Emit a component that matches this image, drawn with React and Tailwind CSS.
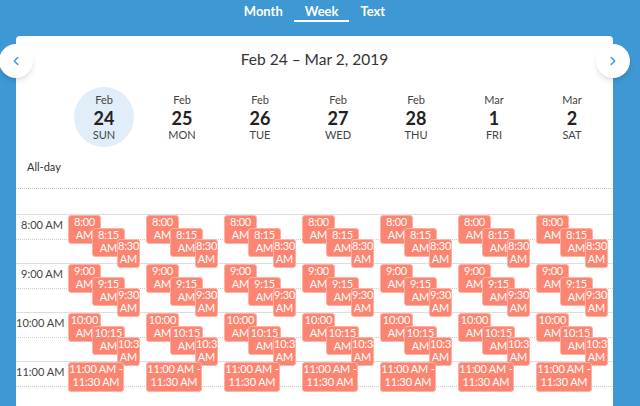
import { ChevronLeft, ChevronRight } from 'lucide-react'

const days = [
  { mon: 'Feb', num: 24, dow: 'SUN', today: true },
  { mon: 'Feb', num: 25, dow: 'MON' },
  { mon: 'Feb', num: 26, dow: 'TUE' },
  { mon: 'Feb', num: 27, dow: 'WED' },
  { mon: 'Feb', num: 28, dow: 'THU' },
  { mon: 'Mar', num: 1, dow: 'FRI' },
  { mon: 'Mar', num: 2, dow: 'SAT' },
]

const hours = ['8:00 AM', '9:00 AM', '10:00 AM', '11:00 AM', '12:00 PM']

const HOUR = 49

// events repeat each day: three staggered ones per hour, then one wide one
const events = [
  ...[8, 9, 10].flatMap((h, i) => [
    { label: `${h}:00 AM`, top: i * HOUR + 1, cls: 'left-[3px] w-[33px] h-[29px]' },
    { label: `${h}:15 AM`, top: i * HOUR + 14, cls: 'left-[27px] w-[33px] h-[29px]' },
    { label: `${h}:30 AM`, top: i * HOUR + 25, cls: 'left-[52px] right-[3px] h-[29px]' },
  ]),
  { label: '11:00 AM - 11:30 AM', top: 3 * HOUR + 1, cls: 'left-[3px] w-[56px] h-[30px]' },
]

function Tab({ label, active }) {
  return (
    <button
      className={`px-[11px] pt-[2px] pb-[1px] text-[13px] leading-[16px] font-bold text-white border-b-2 ${
        active ? 'border-white' : 'border-transparent'
      }`}
    >
      {label}
    </button>
  )
}

function DayHead({ day }) {
  return (
    <div className="flex justify-center">
      <div
        className={`w-[60px] h-[60px] rounded-full flex flex-col items-center justify-center ${
          day.today ? 'bg-[#e1eef9]' : ''
        }`}
      >
        <div className="text-[11px] leading-[14px] text-[#444]">{day.mon}</div>
        <div className="mt-px text-[18px] leading-[20px] font-bold text-[#222]">{day.num}</div>
        <div className="text-[11px] leading-[13px] text-[#444]">{day.dow}</div>
      </div>
    </div>
  )
}

function Event({ ev }) {
  return (
    <div
      className={`absolute ${ev.cls} overflow-hidden rounded-[3px] border border-[#fdb2a5] bg-[#fc8571] text-center text-[11px] leading-[12.5px] tracking-[-0.2px] text-white`}
      style={{ top: ev.top }}
    >
      {ev.label}
    </div>
  )
}

export default function App() {
  return (
    <div className="h-[406px] overflow-hidden bg-[#3d98d4] font-['Lato',sans-serif]">
      <div className="relative w-[597px] ml-4">
        <nav className="flex items-start justify-center h-9 pt-px">
          <Tab label="Month" />
          <Tab label="Week" active />
          <Tab label="Text" />
        </nav>

        <div className="bg-white rounded-t-[4px]">
          <h1 className="pt-[13px] text-center text-[15.5px] leading-[20px] text-[#333]">
            Feb 24 – Mar 2, 2019
          </h1>

          <div className="mt-[18px] pl-[49px] pr-[2px] grid grid-cols-7">
            {days.map((d) => (
              <DayHead key={d.num} day={d} />
            ))}
          </div>

          <div className="mt-[13px] px-[11px] text-[11px] leading-[14px] text-[#333]">All-day</div>
          <div className="mt-[14px] border-t border-dotted border-[#c8c8c8]" />

          {/* time grid */}
          <div className="relative mt-[25px]">
            {hours.map((h) => (
              <div key={h}>
                <div className="h-[25px] border-t border-[#dddddd] flex">
                  <div className="w-[49px] pr-[2px] pt-[3px] text-right text-[11px] leading-[14px] text-[#444] whitespace-nowrap">
                    {h}
                  </div>
                </div>
                <div className="h-[24px] border-t border-dotted border-[#cccccc]" />
              </div>
            ))}

            <div className="absolute inset-0 pl-[49px] pr-[2px] grid grid-cols-7">
              {days.map((d) => (
                <div key={d.num} className="relative">
                  {events.map((ev, i) => (
                    <Event key={i} ev={ev} />
                  ))}
                </div>
              ))}
            </div>
          </div>
        </div>

        <button className="absolute left-[-17px] top-[44px] w-[34px] h-[34px] rounded-full bg-white shadow-md flex items-center justify-center text-[#3d98d4]">
          <ChevronLeft size={14} strokeWidth={2.5} />
        </button>
        <button className="absolute left-[580px] top-[44px] w-[34px] h-[34px] rounded-full bg-white shadow-md flex items-center justify-center text-[#3d98d4]">
          <ChevronRight size={14} strokeWidth={2.5} />
        </button>
      </div>
    </div>
  )
}
